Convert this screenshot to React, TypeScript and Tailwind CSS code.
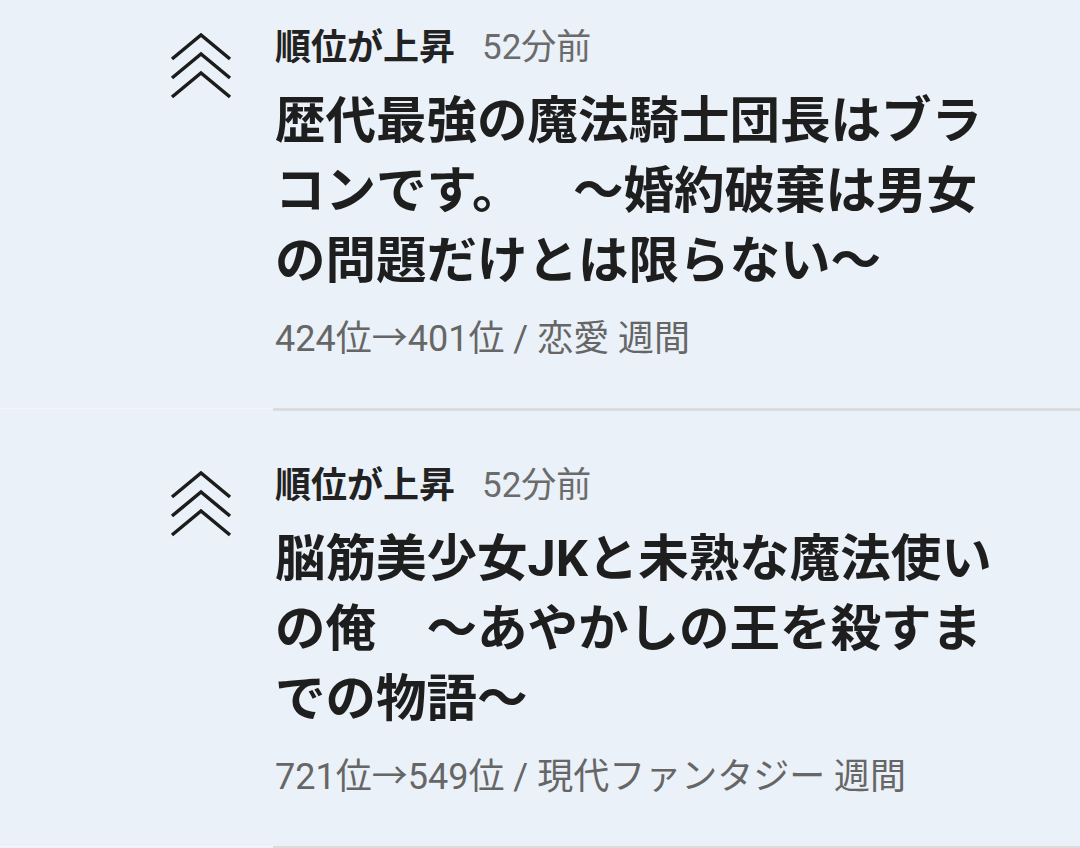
import React from 'react';

const ITEMS = [
  {
    title: '歴代最強の魔法騎士団長はブラコンです。　～婚約破棄は男女の問題だけとは限らない～',
    from: 424,
    to: 401,
    genre: '恋愛',
  },
  {
    title: '脳筋美少女JKと未熟な魔法使いの俺　～あやかしの王を殺すまでの物語～',
    from: 721,
    to: 549,
    genre: '現代ファンタジー',
  },
];

function RankUpIcon() {
  return (
    <svg width="62" height="66" viewBox="0 0 62 66" fill="none" stroke="#1c1c1c" strokeWidth="3.5" strokeLinejoin="miter">
      <polyline points="2,26 31,2 60,26" />
      <polyline points="2,45 31,21 60,45" />
      <polyline points="2,64 31,40 60,64" />
    </svg>
  );
}

export default function App() {
  return (
    <div className="min-h-[848px] w-[1080px] overflow-hidden bg-[#eaf1f8] font-['Roboto','Noto_Sans_CJK_JP',sans-serif]">
      <div className="mt-[-27px]">
        {ITEMS.map((item, idx) => (
          <div key={idx}>
            <div className="flex pl-[170px] pt-[51px] pb-[45px]">
              <div className="w-[62px] shrink-0 mt-[9px]">
                <RankUpIcon />
              </div>
              <div className="ml-[43px] w-[735px]">
                <div className="flex items-center h-[48px]">
                  <span className="text-[36px] font-bold text-[#222222] leading-[48px]">順位が上昇</span>
                  <span className="ml-[27px] text-[35px] text-[#6b6b6b] leading-[48px]">52分前</span>
                </div>
                <h2 className="mt-[14px] text-[50.5px] font-bold text-[#1e1e1e] leading-[70px] [text-spacing-trim:space-all]">
                  {item.title}
                </h2>
                <p className="mt-[19px] text-[36px] text-[#666666] leading-[48px]">
                  {item.from}位→{item.to}位 / {item.genre} 週間
                </p>
              </div>
            </div>
            <div className="flex h-[3px]">
              <div className="w-[273px] border-t border-[#f3f6fa]" />
              <div className="flex-1 bg-[#dcdcdc]" />
            </div>
          </div>
        ))}
      </div>
    </div>
  );
}
